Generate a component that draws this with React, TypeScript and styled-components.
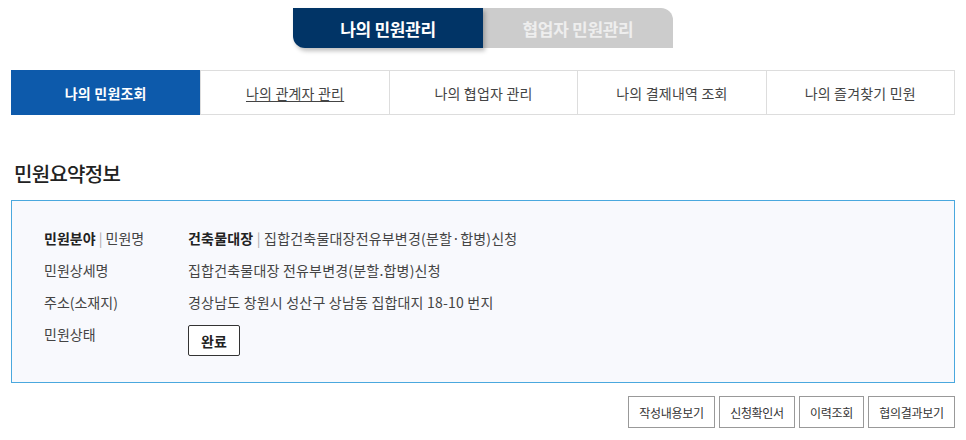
import React from 'react'
import styled, { createGlobalStyle } from 'styled-components'

const GlobalStyle = createGlobalStyle`
    body {
        margin: 0;
        background: #ffffff;
        font-family: 'Noto Sans CJK KR', 'Noto Sans', sans-serif;
        color: #333333;
    }
`

const menuTabs = ['나의 민원조회', '나의 관계자 관리', '나의 협업자 관리', '나의 결제내역 조회', '나의 즐겨찾기 민원']

const actions = [
    { label: '작성내용보기', width: 87 },
    { label: '신청확인서', width: 76 },
    { label: '이력조회', width: 65 },
    { label: '협의결과보기', width: 87 },
]

const App: React.FunctionComponent = () => {
    return (
        <>
            <GlobalStyle />
            <Page>
                <TopSwitch>
                    <SwitchTab $active>나의 민원관리</SwitchTab>
                    <SwitchTab>협업자 민원관리</SwitchTab>
                </TopSwitch>
                <MenuBar>
                    {menuTabs.map((t, i) => (
                        <MenuTab key={t} $active={i === 0} $underline={i === 1}>
                            <span>{t}</span>
                        </MenuTab>
                    ))}
                </MenuBar>
                <Title>민원요약정보</Title>
                <SummaryBox>
                    <Row>
                        <Label>
                            <strong>민원분야</strong> <Bar>|</Bar> 민원명
                        </Label>
                        <Value>
                            <strong>건축물대장</strong> <Bar>|</Bar> 집합건축물대장전유부변경(분할·합병)신청
                        </Value>
                    </Row>
                    <Row>
                        <Label>민원상세명</Label>
                        <Value>집합건축물대장 전유부변경(분할.합병)신청</Value>
                    </Row>
                    <Row>
                        <Label>주소(소재지)</Label>
                        <Value>경상남도 창원시 성산구 상남동 집합대지 18-10 번지</Value>
                    </Row>
                    <Row>
                        <Label>민원상태</Label>
                        <Value>
                            <StatusButton>완료</StatusButton>
                        </Value>
                    </Row>
                </SummaryBox>
                <Actions>
                    {actions.map(a => (
                        <ActionButton key={a.label} $width={a.width}>
                            {a.label}
                        </ActionButton>
                    ))}
                </Actions>
            </Page>
        </>
    )
}

const Page = styled.div`
    padding: 8px 11px 0;
    width: 944px;
`

const TopSwitch = styled.div`
    display: flex;
    justify-content: center;
`

const SwitchTab = styled.div<{ $active?: boolean }>`
    width: 190px;
    height: 40px;
    display: flex;
    align-items: center;
    justify-content: center;
    font-size: 17px;
    font-weight: 700;
    letter-spacing: -0.3px;
    color: ${p => (p.$active ? '#ffffff' : '#eeeeee')};
    background: ${p => (p.$active ? '#013466' : '#cccccc')};
    border-radius: ${p => (p.$active ? '0 0 0 12px' : '0 12px 0 0')};
    box-shadow: ${p => (p.$active ? '2px 3px 4px rgba(0, 0, 0, 0.25)' : 'none')};
    position: relative;
    z-index: ${p => (p.$active ? 1 : 0)};
`

const MenuBar = styled.div`
    margin-top: 22px;
    display: grid;
    grid-template-columns: repeat(5, 1fr);
    border: 1px solid #dddddd;
`

const MenuTab = styled.div<{ $active?: boolean; $underline?: boolean }>`
    display: flex;
    align-items: center;
    justify-content: center;
    font-size: 14px;
    letter-spacing: 0.2px;
    font-weight: ${p => (p.$active ? 700 : 400)};
    color: ${p => (p.$active ? '#ffffff' : '#444444')};
    background: ${p => (p.$active ? '#0d5aab' : '#ffffff')};
    border-left: ${p => (p.$active ? 'none' : '1px solid #dddddd')};
    margin: ${p => (p.$active ? '-1px 0 -1px -1px' : '0')};
    height: ${p => (p.$active ? '45px' : '43px')};

    span {
        text-decoration: ${p => (p.$underline ? 'underline' : 'none')};
        text-underline-offset: 2px;
    }
`

const Title = styled.h2`
    margin: 46px 0 0 3px;
    font-size: 20px;
    font-weight: 500;
    color: #222222;
    line-height: 26px;
    letter-spacing: -0.7px;
`

const SummaryBox = styled.div`
    margin-top: 13px;
    border: 1px solid #4aa8de;
    background: #f8f9fd;
    padding: 21px 32px 26px;
    display: flex;
    flex-direction: column;
`

const Row = styled.div`
    display: grid;
    grid-template-columns: 144px 1fr;
    align-items: start;
`

const Label = styled.div`
    font-size: 14px;
    line-height: 32px;
    color: #444444;

    strong {
        color: #222222;
        font-weight: 700;
    }
`

const Value = styled.div`
    font-size: 14px;
    line-height: 32px;
    letter-spacing: 0.2px;
    color: #444444;

    strong {
        color: #222222;
        font-weight: 700;
    }
`

const Bar = styled.span`
    color: #aaaaaa;
`

const StatusButton = styled.div`
    margin-top: 7px;
    width: 52px;
    height: 31px;
    box-sizing: border-box;
    border: 1px solid #333333;
    border-radius: 2px;
    background: #ffffff;
    display: flex;
    align-items: center;
    justify-content: center;
    font-size: 14px;
    font-weight: 700;
    color: #222222;
`

const Actions = styled.div`
    margin-top: 13px;
    display: flex;
    justify-content: flex-end;
    gap: 4px;
`

const ActionButton = styled.div<{ $width: number }>`
    width: ${p => p.$width}px;
    height: 32px;
    box-sizing: border-box;
    border: 1px solid #999999;
    background: #ffffff;
    display: flex;
    align-items: center;
    justify-content: center;
    font-size: 12px;
    color: #333333;
    letter-spacing: -0.3px;
`

export default App
